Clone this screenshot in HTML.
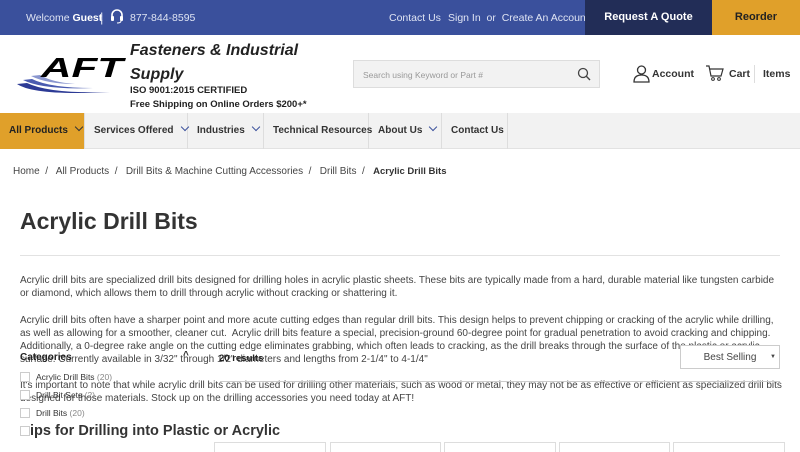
<!DOCTYPE html>
<html><head><meta charset="utf-8"><style>
*{margin:0;padding:0;box-sizing:border-box}
body{width:800px;height:450px;overflow:hidden;background:#fff;font-family:"Liberation Sans",sans-serif;color:#333;position:relative}
.a{position:absolute;white-space:nowrap}
.top{position:absolute;left:0;top:0;width:800px;height:35px;background:#3a509c;color:#dfe4f3;font-size:10.5px}
.nav{position:absolute;left:0;top:113px;width:800px;height:36px;background:#f2f2f2;border-bottom:1px solid #e2e2e2}
.nav div{position:absolute;top:0;height:36px;line-height:36px;font-size:10px;font-weight:bold;color:#333;border-right:1px solid #ddd;padding-left:9px;white-space:nowrap}
.chev{display:inline-block;width:6px;height:6px;border-right:1.3px solid #3a509c;border-bottom:1.3px solid #3a509c;transform:rotate(45deg);margin-left:8px;position:relative;top:-3px}
p.t{position:absolute;left:20px;width:762px;font-size:10px;line-height:13px;color:#444}
.cb{position:absolute;left:20px;width:10px;height:10px;border:1px solid #ccc;background:#fff}
.cl{position:absolute;left:36px;font-size:8.5px;color:#333}
.cl span{color:#888}
.box{position:absolute;top:442px;height:10px;border:1px solid #ddd;border-bottom:none}
</style></head><body>
<div class="top">
<span class="a" style="left:26px;top:12px">Welcome <b style="color:#fff">Guest</b></span>
<span class="a" style="left:100px;top:10px;font-size:13px">|</span>
<svg class="a" style="left:110px;top:9px" width="14" height="15" viewBox="0 0 14 15"><path d="M2 8V6a5 5 0 0 1 10 0v2" stroke="#fff" stroke-width="1.6" fill="none"/><rect x="1" y="7" width="3" height="5" rx="1" fill="#fff"/><rect x="10" y="7" width="3" height="5" rx="1" fill="#fff"/><path d="M11 12q0 2-4 2" stroke="#fff" fill="none"/></svg>
<span class="a" style="left:130px;top:12px">877-844-8595</span>
<span class="a" style="left:389px;top:12px">Contact Us</span>
<span class="a" style="left:448px;top:12px">Sign In&nbsp; or&nbsp; Create An Account</span>
<div class="a" style="left:585px;top:0;width:127px;height:35px;background:#222d57;color:#fff;font-weight:bold;text-align:center;line-height:35px;font-size:11px">Request A Quote</div>
<div class="a" style="left:712px;top:0;width:88px;height:35px;background:#e0a02a;color:#222;font-weight:bold;text-align:center;line-height:35px;font-size:11px">Reorder</div>
</div>
<svg class="a" style="left:15px;top:50px" width="112" height="46" viewBox="0 0 112 46"><path d="M2 34 Q20 46 95 42 Q35 44 12 33 Z" fill="#2c3a95"/><path d="M8 30 Q28 40 78 38 Q35 38 17 29Z" fill="#4a5bb0"/><path d="M16 26 Q32 34 60 34 Q36 32 25 25Z" fill="#8a96cf"/><text x="26" y="27" font-family="Liberation Sans" font-style="italic" font-weight="bold" font-size="28" fill="#000" textLength="82" lengthAdjust="spacingAndGlyphs">AFT</text></svg>
<div class="a" style="left:130px;top:39px;font-size:16px;font-style:italic;font-weight:bold;color:#222;line-height:24px">Fasteners &amp; Industrial<br>Supply</div>
<div class="a" style="left:130px;top:84px;font-size:9.5px;font-weight:bold;color:#222;line-height:13.5px">ISO 9001:2015 CERTIFIED<br>Free Shipping on Online Orders $200+*</div>
<div class="a" style="left:353px;top:60px;width:247px;height:28px;background:#f2f2f2;border:1px solid #ddd;font-size:8.5px;color:#999;padding:9px 0 0 9px">Search using Keyword or Part #
<svg style="position:absolute;right:8px;top:6px" width="14" height="14" viewBox="0 0 14 14"><circle cx="6" cy="6" r="4.5" stroke="#444" stroke-width="1.3" fill="none"/><path d="M9.3 9.3 13 13" stroke="#444" stroke-width="1.4"/></svg></div>
<svg class="a" style="left:633px;top:65px" width="17" height="18" viewBox="0 0 17 18"><circle cx="8.5" cy="5" r="4" stroke="#333" stroke-width="1.3" fill="none"/><path d="M1 17q0-7 7.5-7t7.5 7z" stroke="#333" stroke-width="1.3" fill="none"/></svg>
<span class="a" style="left:652px;top:68px;font-size:10.5px;font-weight:bold">Account</span>
<svg class="a" style="left:705px;top:64px" width="19" height="18" viewBox="0 0 19 18"><path d="M1 2h3l2 10h10l2-7H5" stroke="#333" stroke-width="1.2" fill="none"/><circle cx="8" cy="15" r="1.4" stroke="#333" fill="none"/><circle cx="14" cy="15" r="1.4" stroke="#333" fill="none"/></svg>
<span class="a" style="left:729px;top:68px;font-size:10.5px;font-weight:bold">Cart</span>
<div class="a" style="left:754px;top:65px;width:1px;height:18px;background:#ddd"></div>
<span class="a" style="left:763px;top:68px;font-size:10.5px;font-weight:bold">Items</span>
<div class="nav">
<div style="left:0;width:85px;background:#e0a02a;color:#222">All Products<span class="chev" style="border-color:#333"></span></div>
<div style="left:85px;width:103px">Services Offered<span class="chev"></span></div>
<div style="left:188px;width:76px">Industries<span class="chev"></span></div>
<div style="left:264px;width:105px">Technical Resources</div>
<div style="left:369px;width:73px">About Us<span class="chev"></span></div>
<div style="left:442px;width:66px">Contact Us</div>
</div>
<div class="a" style="left:13px;top:166px;font-size:10px;color:#444">Home&nbsp; /&nbsp;&nbsp; All Products&nbsp; /&nbsp;&nbsp; Drill Bits &amp; Machine Cutting Accessories&nbsp; /&nbsp;&nbsp; Drill Bits&nbsp; /&nbsp;&nbsp; <b style="font-size:9.5px;color:#333">Acrylic Drill Bits</b></div>
<div class="a" style="left:20px;top:208px;font-size:23px;font-weight:bold;color:#333">Acrylic Drill Bits</div>
<div class="a" style="left:20px;top:255px;width:760px;height:1px;background:#e2e2e2"></div>
<p class="t" style="top:274px">Acrylic drill bits are specialized drill bits designed for drilling holes in acrylic plastic sheets. These bits are typically made from a hard, durable material like tungsten carbide or diamond, which allows them to drill through acrylic without cracking or shattering it.</p>
<p class="t" style="top:314px">Acrylic drill bits often have a sharper point and more acute cutting edges than regular drill bits. This design helps to prevent chipping or cracking of the acrylic while drilling, as well as allowing for a smoother, cleaner cut.&nbsp; Acrylic drill bits feature a special, precision-ground 60-degree point for gradual penetration to avoid cracking and chipping. Additionally, a 0-degree rake angle on the cutting edge eliminates grabbing, which often leads to cracking, as the drill breaks through the surface of the plastic or acrylic surface. Currently available in 3/32" through 1/2" diameters and lengths from 2-1/4" to 4-1/4"</p>
<p class="t" style="top:379px">It's important to note that while acrylic drill bits can be used for drilling other materials, such as wood or metal, they may not be as effective or efficient as specialized drill bits designed for those materials. Stock up on the drilling accessories you need today at AFT!</p>
<div class="a" style="left:20px;top:352px;font-size:10px;font-weight:bold;color:#222">Categories</div>
<div class="a" style="left:183px;top:350px;font-size:10px;font-weight:bold">^</div>
<div class="a" style="left:219px;top:353px;font-size:9.5px;font-weight:bold;color:#222">20 results</div>
<div class="a" style="left:220px;top:381px;width:560px;height:1px;background:#ccc"></div>
<div class="a" style="left:680px;top:345px;width:100px;height:24px;background:#fff;border:1px solid #ccc;font-size:10px;text-align:center;line-height:23px;color:#444">Best Selling<span style="position:absolute;right:3px;top:0;font-size:6px">▼</span></div>
<div class="cb" style="top:372px"></div><div class="cl a" style="top:372px">Acrylic Drill Bits <span>(20)</span></div>
<div class="cb" style="top:390px"></div><div class="cl a" style="top:390px">Drill Bit Sets <span>(2)</span></div>
<div class="cb" style="top:408px"></div><div class="cl a" style="top:408px">Drill Bits <span>(20)</span></div>
<div class="cb" style="top:426px"></div>
<div class="a" style="left:30px;top:423px;font-size:14.5px;font-weight:bold;color:#333">ips for Drilling into Plastic or Acrylic</div>
<div class="box" style="left:214px;width:112px"></div>
<div class="box" style="left:330px;width:111px"></div>
<div class="box" style="left:444px;width:112px"></div>
<div class="box" style="left:559px;width:111px"></div>
<div class="box" style="left:673px;width:112px"></div>
</body></html>
